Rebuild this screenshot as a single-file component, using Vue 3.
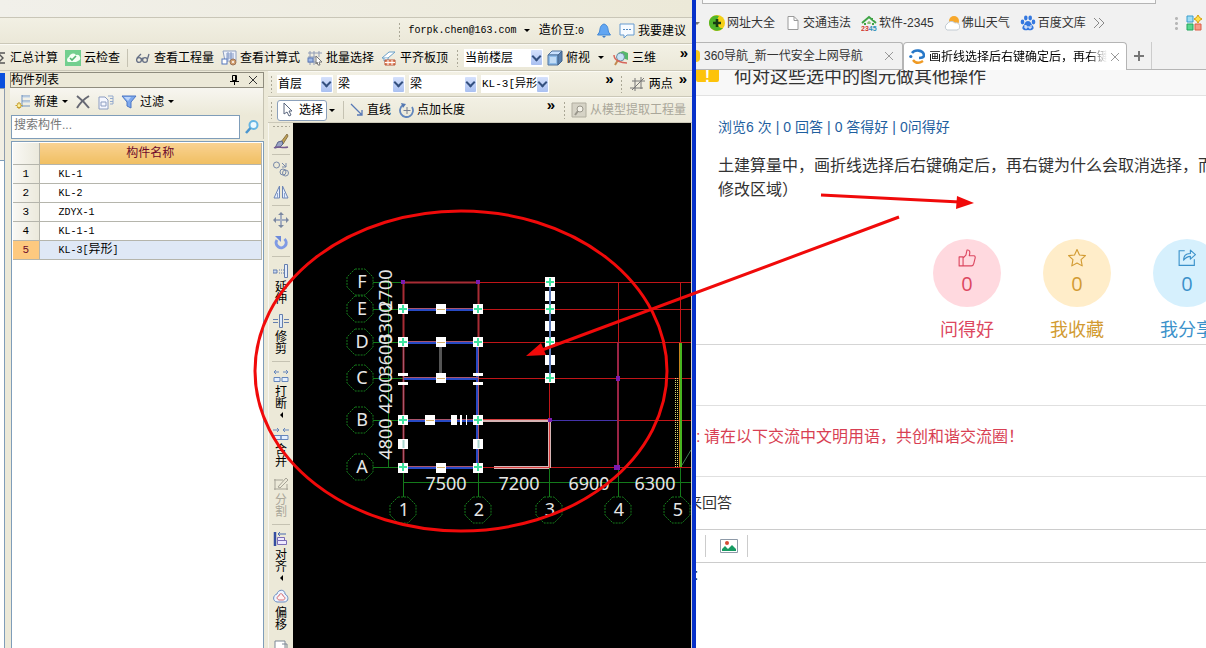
<script setup>
import { ref } from 'vue'

const icons = {
  sigma: '<path d="M14 3H7l5 5-5 5h7" fill="none" stroke="#555" stroke-width="1.4"/>',
  cloud: '<rect width="16" height="16" fill="#72cf8f"/><path d="M3 12a3 3 0 0 1 1-5 4 4 0 0 1 7-2 3 3 0 0 1 2 6l-2 1z" fill="#f5fff6"/><path d="M5 8l2 2 4-4" fill="none" stroke="#52b573" stroke-width="1.6"/>',
  glasses: '<g fill="none" stroke="#667085" stroke-width="1.3"><circle cx="4" cy="10" r="2.4"/><circle cx="10" cy="10" r="2.4"/><path d="M6 9l2-1M2 8l4-4M12.500 9l1.500-5"/></g>',
  formula: '<path d="M2 1h13v10H4z" fill="#eef2fb" stroke="#8fa0c0"/><path d="M5 4h8M5 6h8M5 8h8M7 2v8M10 2v8" stroke="#8298c5" fill="none"/><rect x="1" y="9" width="5" height="5" fill="#fff" stroke="#5577bb"/><circle cx="12" cy="12" r="3" fill="#d2a070" stroke="#9c7458"/><circle cx="12" cy="12" r="1" fill="#fff"/>',
  batch: '<path d="M1 3h14M1 7h9M1 12h8M3 1v14M7 1v14M12 1v6" stroke="#8f9bb5" fill="none"/><rect x="1" y="8" width="5" height="4" fill="#9eb8e6" stroke="#5b79b5"/><path d="M9 6l6 6-3 0 1 3-2 0-1-3-1 2z" fill="#fff" stroke="#777"/>',
  slab: '<path d="M1 8L8 2h6L7 8z" fill="#fff" stroke="#6aa0c8"/><path d="M3 8v3h4V8" fill="#d9ecf7" stroke="#6aa0c8"/><path d="M4 10h10v5H4z" fill="#e88b68" stroke="#b8583a"/><path d="M4 12.500h10M7 10v5M11 10v5" stroke="#fff"/>',
  cube: '<path d="M1 5l4-4h10l-4 4z" fill="#c9e1ff" stroke="#51749e"/><path d="M1 5h10v10H1z" fill="#8fbce9" stroke="#51749e"/><path d="M11 5l4-4v10l-4 4z" fill="#577fae" stroke="#44658c"/><path d="M3 7h6v6H3z" fill="#c2dcf6"/>',
  orbit: '<path d="M5 3l5-2 5 2v7l-6-2z" fill="#54b86a"/><circle cx="7.500" cy="7" r="4" fill="#c6e2f6" stroke="#6c8ba0"/><path d="M5 10l-3 5" stroke="#c18b50" stroke-width="2"/><path d="M1 5c0 6 8 8 13 8" fill="none" stroke="#d6655b" stroke-width="1.500"/>',
  bell: '<path d="M8 1c4 1 4 5 4.500 8l2 3h-13l2-3C4 6 4 2 8 1z" fill="#62a6f2" stroke="#4388d4"/><path d="M6 13h4l-2 2z" fill="#3f7cc5"/>',
  bubble: '<path d="M1 1h14v11H8l-3 3v-3H1z" fill="#f7fbff" stroke="#669bd0"/><path d="M4 6.500h2M7 6.500h2M10 6.500h2" stroke="#5188bf"/>',
  add: '<path d="M7 1v12M7 2h8M7 7h8M7 12h8" stroke="#6e93c2" fill="none"/><path d="M8 3h7M8 8h7" stroke="#b9cfe8"/><path d="M4 8v7M.5 11.500h7M2 9.500l4 4M6 9.500l-4 4" stroke="#c8a02d" stroke-width="1.200"/><circle cx="4" cy="11.500" r="1.500" fill="#fff5a4"/>',
  cross: '<path d="M2 2c4 3 8 7 12 12M14 2C9 5 5 9 2 14" stroke="#666873" stroke-width="2" fill="none"/>',
  copyTo: '<path d="M1 3h6l3 3v9H1z" fill="#f5f7ff" stroke="#8b9cc0"/><path d="M3 8h5v4H3z" fill="none" stroke="#8b9cc0"/><path d="M10 2h5v8h-3M12 4.500h3M12 7.500h3" fill="none" stroke="#93a9cd"/>',
  funnel: '<path d="M1 2h14L10 8v6l-4-2V8z" fill="#7da8ed" stroke="#4d76c4"/><path d="M3 3h7L7 7z" fill="#bcd5fb"/>',
  search: '<circle cx="9.500" cy="6" r="4" fill="#ecf9ff" stroke="#65b5e3" stroke-width="2"/><path d="M6.500 9L2 14" stroke="#4b96cf" stroke-width="2.600"/>',
  twoPoint: '<path d="M2 5h13M0 12h13M5 2v13M11 1v12M2 14L14 2" stroke="#777" fill="none"/>',
  pointer: '<path d="M4 1v11l3-2 2 4 2-1-2-4h3z" fill="#fff" stroke="#59657d"/>',
  line: '<path d="M2 2l11 11M13 8v5H8" fill="none" stroke="#5778b6" stroke-width="1.300"/>',
  pointLen: '<path d="M4 3a6.500 6.500 0 1 0 9 2" fill="none" stroke="#6186bd" stroke-width="1.800"/><path d="M2 1l5 1-3 4z" fill="#5478b1"/><path d="M8 5v7M4.500 8.500h7" stroke="#777f90"/>',
  model: '<path d="M1 1h14v14H1z" fill="#d6d3c6" stroke="#b1aea0"/><circle cx="9" cy="7" r="3" fill="#f4f2e9" stroke="#99968b"/><path d="M7 9l-3 4" stroke="#99968b" stroke-width="2"/>',
  brush: '<path d="M8 9l6-8 1 2-5 8z" fill="#bfa254" stroke="#8a7348"/><path d="M5 9l4-1 1 3-3 3-5 1z" fill="#9ba5c5" stroke="#59648b"/><path d="M1 15c4-3 8 1 14-1" stroke="#755a90" stroke-width="1.500" fill="none"/>',
  clone: '<circle cx="3.500" cy="4" r="3" fill="none" stroke="#7889a8"/><path d="M9 2l4 4M13 2v4H9" stroke="#7889a8" fill="none"/><circle cx="10" cy="11" r="3" fill="none" stroke="#7889a8"/><circle cx="12.500" cy="12" r="3" fill="none" stroke="#7889a8"/>',
  mirror: '<path d="M6.500 2v12H1zM9.500 2v12H15z" fill="#e6efff" stroke="#6e86b5"/><path d="M4.500 9v5M11.500 9v5" stroke="#8da4ce"/>',
  move: '<path d="M7.500 2v12M8.500 2v12M2 7.500h12M2 8.500h12" stroke="#a3adc0"/><path d="M5 3l3-3 3 3zM5 13l3 3 3-3zM3 5L0 8l3 3zM13 5l3 3-3 3z" fill="#7b88a0"/>',
  rotate: '<path d="M11.500 4A5 5 0 1 1 4 5" fill="none" stroke="#7f9ae4" stroke-width="3"/><path d="M2 1h6v6z" fill="#6d8adb"/>',
  extend: '<path d="M0 7h4v3H0z" fill="#c8d8f1" stroke="#657fae"/><path d="M6 7h5M6 10h5" stroke="#657fae" stroke-dasharray="1 1"/><path d="M11.500 1.500h3v13h-3z" fill="#e5edfa" stroke="#657fae"/>',
  trim: '<path d="M0 6.500h5M0 9.500h5M11 6.500h5M11 9.500h5" stroke="#657fae"/><path d="M6.500 1.500h3v13h-3z" fill="#dce9fa" stroke="#657fae"/>',
  split: '<path d="M1 4h5M10 4h5M3 2L1 4l2 2M13 2l2 2-2 2" fill="none" stroke="#6687bc"/><path d="M1 9.500h6v4H1zM9 9.500h6v4H9z" fill="#e4effe" stroke="#6687bc"/>',
  merge: '<path d="M0 4h6M10 4h6M4 2l2 2-2 2M12 2l-2 2 2 2" fill="none" stroke="#6687bc"/><path d="M1 9.500h7v4H1zM8 9.500h7v4H8z" fill="#e4effe" stroke="#6687bc"/>',
  divide: '<path d="M1 4h9M1 13h14M2 3v11M14 8v6M5 11l8-9 2 2-8 8z" fill="none" stroke="#a6a396"/>',
  align: '<path d="M2 1v14" stroke="#344da0" stroke-width="2.500"/><path d="M4.500 6.500h7v3h-7zM4.500 9.500h9v4h-9z" fill="#eee8ff" stroke="#7b6db5"/><path d="M5 3h8M7 1L5 3l2 2" fill="none" stroke="#4868ae"/>',
  offset: '<path d="M4 5c1-5 8-5 8 0 4 2 4 8-1 8H4C-1 12 0 6 4 5z" fill="#edf4ff" stroke="#6b8cc2"/><path d="M6 7c0-3 4-3 4 0 3 1 2 4 0 4H6C3 10 4 7 6 7z" fill="#fff3f3" stroke="#d76c72"/>',
  sheet: '<path d="M2 2h10v12H2z" fill="#fff" stroke="#7d8796"/><path d="M9 5h5v5" fill="none" stroke="#7d8796"/>',
  plusBall: '<circle cx="8" cy="8" r="8" fill="#f3cf16"/><path d="M0 8a8 8 0 0 0 14 5C9 14 6 6 10 1 5-1 0 3 0 8z" fill="#4fb52a"/><path d="M8 4v8M4 8h8" stroke="#173c12" stroke-width="2.600"/>',
  page: '<path d="M3 1.500h6l4 4v9H3z" fill="#fff" stroke="#9a9a9a"/><path d="M9 1.500v4h4" fill="none" stroke="#9a9a9a"/>',
  house: '<path d="M1 8l7-6 7 6M11 3v2M4 8v2M12 8v2" fill="none" stroke="#3fa446" stroke-width="2"/><path d="M8 6v3M6 8h4" stroke="#66b24d"/>',
  weather: '<circle cx="10" cy="6" r="5" fill="#f7a82c"/><path d="M3 15a3.500 3.500 0 0 1 0-6 5 5 0 0 1 8-1 3.600 3.600 0 0 1 2 7z" fill="#fff" stroke="#c3ccd3"/>',
  paw: '<g fill="#3478df"><ellipse cx="2.500" cy="7" rx="1.800" ry="2.400"/><ellipse cx="5.800" cy="3" rx="1.800" ry="2.400"/><ellipse cx="10.200" cy="3" rx="1.800" ry="2.400"/><ellipse cx="13.500" cy="7" rx="1.800" ry="2.400"/><path d="M8 6c3 0 3 3 5 5 2 3-1 5-5 4-4 1-7-1-5-4 2-2 2-5 5-5z"/></g><path d="M5 10v3h2v-2H5M9 11v2h2v-3" fill="none" stroke="#fff"/>',
  apps: '<path d="M1 1h6v6H1z" fill="#9fdcf4" stroke="#389dcc"/><path d="M1 9h6v6H1z" fill="#58d78d" stroke="#22a65d"/><path d="M9 9h6v6H9z" fill="#f79b86" stroke="#db5f46"/><path d="M12 0l1.500 2.500L16 4l-2.500 1.500L12 8l-1.500-2.500L8 4l2.500-1.500z" fill="#ffe14b" stroke="#d59b0b"/>',
  swirl: '<path d="M3 4C6 0 14 1 15 6c0 3-3 3-5 3" fill="none" stroke="#2878c8" stroke-width="2.600"/><path d="M4 11c3 4 7 3 10 1" fill="none" stroke="#ef9a24" stroke-width="2.400"/><circle cx="1.800" cy="7.500" r="1.600" fill="#2878c8"/>',
  thumb: '<path d="M1 7h3.500v8H1zM4.500 8L7 5.500 8 1c2.500-.5 3 1.500 2 5h4c1.500 0 1.500 1.500 1 3l-1 4c-.3 1.500-1 2-2 2H4.500" fill="none" stroke="currentColor" stroke-linejoin="round"/>',
  star: '<path d="M8 .5l2.200 4.800 5.300.6-3.900 3.600 1 5.500L8 12.500 3.400 15l1-5.500L.5 5.900l5.300-.6z" fill="none" stroke="currentColor" stroke-linejoin="round"/>',
  share: '<path d="M6 1.500H1v13h13.500V9" fill="none" stroke="currentColor"/><path d="M5 10c0-4 2-6 6-6V1l4.500 4L11 9V6.500C8 6.500 6.500 8 5 10z" fill="none" stroke="currentColor" stroke-linejoin="round"/>',
  picture: '<path d="M.5 2.500h17v13H.5z" fill="#fff" stroke="#8e9aa8"/><circle cx="7" cy="6" r="2" fill="#d44b35"/><path d="M2 14v-2l3-3 3 3 4-4 4 4v2z" fill="#169b62"/>',
}

const mainTools = [
  { icon: 'glasses', label: '查看工程量' },
  { icon: 'formula', label: '查看计算式' },
  { icon: 'batch', label: '批量选择' },
  { icon: 'slab', label: '平齐板顶' },
]
const combos = ['首层', '梁', '梁', 'KL-3[异形]']
const rows = ref([
  ['KL-1', ''], ['KL-2', ''], ['ZDYX-1', ''], ['KL-1-1', ''], ['KL-3[', '异形'],
])
const sideTools = [
  { icon: 'brush', name: '格式刷' }, { sep: true },
  { icon: 'clone', name: '复制' }, { icon: 'mirror', name: '镜像' }, { sep: true },
  { icon: 'move', name: '移动' }, { icon: 'rotate', name: '旋转' }, { sep: true },
  { icon: 'extend', label: '延伸' }, { icon: 'trim', label: '修剪' }, { sep: true },
  { icon: 'split', label: '打断', menu: true }, { icon: 'merge', label: '合并' },
  { icon: 'divide', label: '分割', disabled: true }, { sep: true },
  { icon: 'align', label: '对齐', menu: true }, { icon: 'offset', label: '偏移' },
  { icon: 'sheet', name: '更多' },
]
const bookmarks = [
  { icon: 'plusBall', label: '网址大全' }, { icon: 'page', label: '交通违法' },
  { icon: 'house', label: '软件-2345' }, { icon: 'weather', label: '佛山天气' },
  { icon: 'paw', label: '百度文库' },
]
const votes = [
  { icon: 'thumb', label: '问得好', tone: 'pink' },
  { icon: 'star', label: '我收藏', tone: 'gold' },
  { icon: 'share', label: '我分享', tone: 'blue' },
]
const axisY = [['F', 282], ['E', 309], ['D', 342], ['C', 378], ['B', 420], ['A', 467]]
const axisX = [['1', 404], ['2', 479], ['3', 550], ['4', 619], ['5', 678]]
const spansX = [['7500', 447], ['7200', 520], ['6900', 590], ['6300', 656]]
const spansY = [['2700', 290], ['3300', 323], ['3600', 355], ['4200', 393], ['4800', 439]]
const grips = [
  [404, 309], [442, 309], [479, 309], [404, 342], [442, 342], [479, 342], [442, 378],
  [404, 420], [431, 420], [479, 420], [404, 444], [479, 444], [404, 468], [442, 468], [479, 468],
  [551, 282], [551, 296], [551, 309], [551, 326], [551, 342], [551, 360], [551, 378],
]
const nodes = [
  [404, 309], [479, 309], [404, 342], [479, 342], [404, 420], [479, 420], [404, 467], [479, 467],
  [551, 282], [551, 309], [551, 342], [551, 378],
]
const octagon = (x, y) => [[-5, -13], [5, -13], [13, -5], [13, 5], [5, 13], [-5, 13], [-13, 5], [-13, -5]]
  .map(([a, b]) => `${x + a},${y + b}`).join(' ')
const keyword = ref('')
</script>

<template>
  <div class="screen">
    <section class="cad">
      <header class="caption"></header>
      <div class="bar account">
        <i class="grip"></i>
        <button class="mono email">forpk.chen@163.com<i class="caret"></i></button>
        <span class="beans">造价豆:<span class="mono">0</span></span>
        <button aria-label="通知"><svg viewBox="0 0 16 16" v-html="icons.bell"></svg></button>
        <button><svg viewBox="0 0 16 16" v-html="icons.bubble"></svg>我要建议</button>
      </div>
      <div class="bar main">
        <button class="sum"><svg viewBox="0 0 16 16" v-html="icons.sigma"></svg>汇总计算</button>
        <button><svg viewBox="0 0 16 16" v-html="icons.cloud"></svg>云检查</button>
        <i class="vline"></i>
        <button v-for="t in mainTools" :key="t.label"><svg viewBox="0 0 16 16" v-html="icons[t.icon]"></svg>{{ t.label }}</button>
        <i class="grip"></i>
        <label class="combo view"><select aria-label="楼层范围"><option>当前楼层</option></select><i class="drop"></i></label>
        <button><svg viewBox="0 0 16 16" v-html="icons.cube"></svg>俯视<i class="caret wide"></i></button>
        <button><svg viewBox="0 0 16 16" v-html="icons.orbit"></svg>三维</button>
        <button class="more" aria-label="更多">»</button>
      </div>

      <div class="body">
        <div class="sliver"><i class="blue-cap"></i><i class="tab"></i><i class="sheet"></i></div>
        <aside class="panel">
          <h2 class="panel-title"><span>构件列表</span>
            <svg viewBox="0 0 30 12"><path d="M2.500 1.500h4v5h-4zM0 7.500h9M4.500 7v4M5.500 1v6" fill="none" stroke="#000" /><path d="M19 2l8 8M27 2l-8 8" stroke="#333" fill="none" /></svg>
          </h2>
          <div class="panel-tools">
            <button><svg viewBox="0 0 16 16" v-html="icons.add"></svg>新建<i class="caret"></i></button>
            <button aria-label="删除"><svg viewBox="0 0 16 16" v-html="icons.cross"></svg></button>
            <button aria-label="复制到"><svg viewBox="0 0 16 16" v-html="icons.copyTo"></svg></button>
            <button><svg viewBox="0 0 16 16" v-html="icons.funnel"></svg>过滤<i class="caret"></i></button>
          </div>
          <div class="search">
            <input v-model="keyword" type="text" aria-label="搜索构件" placeholder="搜索构件...">
            <button aria-label="搜索"><svg viewBox="0 0 16 16" v-html="icons.search"></svg></button>
          </div>
          <div class="list">
            <table>
              <thead><tr><th class="no"></th><th class="name">构件名称</th></tr></thead>
              <tbody>
                <tr v-for="(r, i) in rows" :key="i" :class="{ active: i === 4 }">
                  <td class="no">{{ i + 1 }}</td>
                  <td class="name"><span class="mono">{{ r[0] }}</span>{{ r[1] }}<span v-if="r[1]" class="mono">]</span></td>
                </tr>
              </tbody>
            </table>
          </div>
        </aside>

        <div class="work">
          <div class="bar selectors">
            <i class="grip"></i>
            <label v-for="(c, i) in combos" :key="i" class="combo" :class="{ short: i === 0, code: i === 3 }"><select :aria-label="'构件选择' + (i + 1)"><option>{{ c }}</option></select><i class="drop"></i></label>
            <button class="more" aria-label="更多">»</button>
            <i class="grip"></i>
            <button><svg viewBox="0 0 16 16" v-html="icons.twoPoint"></svg>两点</button>
            <button class="more end" aria-label="更多">»</button>
          </div>
          <div class="bar draw">
            <i class="grip"></i>
            <button class="picked"><svg viewBox="0 0 16 16" v-html="icons.pointer"></svg>选择</button>
            <button class="tiny" aria-label="选择方式"><i class="caret"></i></button>
            <i class="vline"></i>
            <button><svg viewBox="0 0 16 16" v-html="icons.line"></svg>直线</button>
            <button><svg viewBox="0 0 16 16" v-html="icons.pointLen"></svg>点加长度</button>
            <button class="more" aria-label="更多">»</button>
            <i class="grip"></i>
            <button disabled><svg viewBox="0 0 16 16" v-html="icons.model"></svg>从模型提取工程量</button>
          </div>
          <div class="stage">
            <nav class="side">
              <i class="hgrip"></i>
              <template v-for="(t, i) in sideTools" :key="i">
                <i v-if="t.sep" class="hline"></i>
                <button v-else :class="{ labelled: t.label, menu: t.menu }" :disabled="t.disabled" :aria-label="t.label || t.name">
                  <svg viewBox="0 0 16 16" v-html="icons[t.icon]"></svg>
                  <span v-if="t.label">{{ t.label }}</span>
                  <i v-if="t.menu" class="left-caret"></i>
                </button>
              </template>
            </nav>
            <svg class="canvas" viewBox="294 123 398 525" preserveAspectRatio="xMinYMin slice">
              <g stroke="#147a1b" fill="none">
                <path v-for="a in axisY" :key="a[0]" :d="`M374 ${a[1]}.5H404`" />
                <path d="M389.500 278V467M404.500 468V497M479.500 468V497M550.500 468V497M619.500 468V497M681.500 468V497M404 482.500H692" />
                <polygon v-for="a in axisY" :key="'l' + a[0]" :points="octagon(361, a[1])" stroke-dasharray="2 1" />
                <polygon v-for="a in axisX" :key="'b' + a[0]" :points="octagon(a[1], 510)" stroke-dasharray="2 1" />
              </g>
              <g stroke="#c01518" fill="none">
                <path d="M404 282.500H692M404 309.500H692M404 342.500H692M404 378.500H692M479 420.500H692M404 467.500H692M550.500 282V467M619.500 282V467M681.500 282V467" />
              </g>
              <path d="M404 282.500H479M404.500 282V467M479.500 282V342" stroke="#a82c35" stroke-width="2" fill="none" />
              <path d="M404 309.500H479M404 342.500H479M404 378.500H479M404 420.500H479M404 467.500H479M478.500 342V467" stroke="#2749c4" stroke-width="3" fill="none" />
              <path d="M404 308.500H479M404 341.500H479M404 377.500H479M404 419.500H479M404 466.500H479M479.500 342V467M404.500 342V467" stroke="#aa556d" fill="none" />
              <path d="M441.500 346V374" stroke="#555" stroke-width="3" />
              <path d="M483 420.500H550M495 467.500H550M550.500 420V468" stroke="#d6b4b4" stroke-width="3" fill="none" />
              <path d="M484 419.500H550M495 467.500H550M550.500 420V468" stroke="#d83f3f" fill="none" />
              <path d="M551 420.500H619" stroke="#4433aa" />
              <path d="M619 342V467" stroke="#9b2445" stroke-width="2" />
              <path d="M681.500 343V467" stroke="#48b420" stroke-width="3" />
              <path d="M680.500 343V467" stroke="#c6861d" />
              <path d="M676.500 378V467M678.500 378V467" stroke="#e0d870" stroke-dasharray="1 1" />
              <path d="M683 465L692 450" stroke="#427b55" />
              <g fill="#7a1bb0">
                <rect x="402" y="280" width="4" height="4" /><rect x="477" y="280" width="4" height="4" />
                <rect x="617" y="376" width="4" height="5" /><rect x="549" y="418" width="4" height="4" /><rect x="615" y="465" width="6" height="5" />
              </g>
              <g fill="#fff">
                <rect v-for="(g, i) in grips" :key="i" :x="g[0] - 5" :y="g[1] - 5" width="10" height="10" />
                <path d="M399 373h10v3h-10zM399 382h10v3h-10zM474 373h10v3h-10zM474 382h10v3h-10zM452 415h6v10h-6zM461 415h2v10h-2zM467 415h1v10h-1z" />
              </g>
              <path d="M551 287V374" stroke="#5f7cba" stroke-width="2" />
              <path d="M438 309.500h8M438 342.500h8M438 378.500h8M427 420.500h8M438 467.500h8" stroke="#d7b06a" />
              <path d="M404.500 440V448M479.500 440V448" stroke="#a9d5cd" stroke-width="2" />
              <path v-for="(n, i) in nodes" :key="'n' + i" :d="`M${n[0] - 4} ${n[1]}h8M${n[0]} ${n[1] - 4}v8`" stroke="#3fe3a0" stroke-width="2" />
              <g class="dims">
                <text v-for="a in axisY" :key="a[0]" :x="363" :y="a[1] + 6">{{ a[0] }}</text>
                <text v-for="a in axisX" :key="a[0]" :x="a[1] + 1" y="516">{{ a[0] }}</text>
                <text v-for="s in spansX" :key="s[0]" :x="s[1]" y="490">{{ s[0] }}</text>
                <text v-for="s in spansY" :key="s[0]" :transform="`translate(393 ${s[1]}) rotate(-90)`">{{ s[0] }}</text>
              </g>
            </svg>
          </div>
        </div>
      </div>
    </section>

    <section class="browser">
      <div class="address"><i class="field"></i><i class="cell"></i></div>
      <nav class="bookmarks">
        <i class="caret first"></i>
        <a v-for="b in bookmarks" :key="b.label" href="#">
          <svg viewBox="0 0 16 16"><g v-html="icons[b.icon]"></g><text v-if="b.icon === 'house'" class="tag" x="0" y="16"><tspan fill="#d23a2e">23</tspan><tspan fill="#2c8fb8">45</tspan></text></svg>{{ b.label }}
        </a>
        <button class="chev" aria-label="更多书签"><svg viewBox="0 0 12 12"><path d="M1 1l5 5-5 5M6 1l5 5-5 5" fill="none" stroke="#888" /></svg></button>
        <i class="dots"></i>
        <button aria-label="应用"><svg viewBox="0 0 16 16" v-html="icons.apps"></svg></button>
      </nav>
      <div class="tabs">
        <div class="tab-item old"><i class="fav"></i><span>360导航_新一代安全上网导航</span>
          <button aria-label="关闭"><svg viewBox="0 0 8 8"><path d="M0 0l8 8M8 0L0 8" stroke="#999" fill="none" /></svg></button></div>
        <div class="tab-item current"><svg class="fav-icon" viewBox="0 0 16 16" v-html="icons.swirl"></svg><span>画折线选择后右键确定后，再右键</span>
          <button aria-label="关闭"><svg viewBox="0 0 8 8"><path d="M0 0l8 8M8 0L0 8" stroke="#999" fill="none" /></svg></button></div>
        <button class="plus" aria-label="新标签页"><svg viewBox="0 0 10 10"><path d="M5 0v10M0 5h10" stroke="#777" stroke-width="2" /></svg></button>
      </div>
      <main class="page">
        <header class="question"><i class="badge">!</i><h1>何对这些选中的图元做其他操作</h1></header>
        <div class="stats">
          <a href="#">浏览6 次</a><i>|</i><a href="#">0 回答</a><i>|</i><a href="#">0 答得好</a><i>|</i><a href="#">0问得好</a>
        </div>
        <p class="desc"><span>土建算量中，画折线选择后右键确定后，再右键为什么会取消选择，而</span><span>修改区域）</span></p>
        <div class="votes">
          <button v-for="v in votes" :key="v.label" :class="v.tone">
            <span class="disc"><svg viewBox="0 0 16 16" v-html="icons[v.icon]"></svg><b>0</b></span>{{ v.label }}
          </button>
        </div>
        <div class="blank"></div>
        <p class="notice"><i>:</i>请在以下交流中文明用语，共创和谐交流圈！</p>
        <h3 class="reply"><span>来回答</span></h3>
        <div class="editor-tools"><button aria-label="插入图片"><svg viewBox="0 0 18 18" v-html="icons.picture"></svg></button></div>
        <div class="editor">:</div>
      </main>
    </section>

    <svg class="marks" viewBox="0 0 1206 648" preserveAspectRatio="none">
      <g fill="none" stroke="#f00a0a" stroke-width="3">
        <ellipse cx="461" cy="371" rx="206" ry="160" />
        <path d="M821 195L960 202M899 217L542 350" />
      </g>
      <path d="M974 203L956 209L957 196zM526 356L541 343L546 355z" fill="#f00a0a" />
    </svg>
  </div>
</template>

<style>
html, body, #app { height: 100%; }
</style>

<style scoped>
.screen { position: relative; display: flex; height: 100vh; overflow: hidden; background: #fff; color: #000; font: 12px/16px "Liberation Sans", "Noto Sans CJK SC", sans-serif; }
.screen *, .screen { box-sizing: border-box; }
i, b { font-style: normal; font-weight: 400; }
button { display: flex; align-items: center; gap: 3px; flex: none; margin: 0; padding: 0; border: 0; background: none; color: inherit; font: inherit; white-space: nowrap; }
button svg, a svg { flex: none; width: 16px; height: 16px; }
button:disabled { color: #aaa79a; }
.mono { font-family: "Liberation Mono", monospace; font-size: 10px; }
.marks { position: absolute; inset: 0; width: 100%; height: 100%; pointer-events: none; }

.cad { flex: 692 1 0; min-width: 0; display: flex; flex-direction: column; background: #ece9d8; overflow: hidden; }
.caption { flex: none; height: 17px; background: linear-gradient(90deg, #f1f0ea, #ece9d8); }
.bar { display: flex; align-items: center; flex: none; height: 26px; border-top: 1px solid #fbfaf4; border-bottom: 1px solid #cbc8b8; background: linear-gradient(#f2f0e4, #ebe8d8); }
.grip { flex: none; width: 3px; height: 18px; background: radial-gradient(circle, #aaa796 1px, transparent 1px) 0 0 / 3px 4px; }
.vline { flex: none; width: 1px; height: 18px; background: #c5c2b2; }
.caret { width: 0; height: 0; border: 3px solid transparent; border-top-color: #000; border-bottom: 0; margin-left: 1px; }
.caret.wide { margin-left: 5px; }
.account { height: 27px; justify-content: flex-end; padding-right: 6px; border-top-color: #c9c6b7; }
.account .email { margin: 0 9px 0 8px; gap: 6px; }
.beans { margin-right: 12px; white-space: nowrap; }
.account button + button { margin-left: 7px; }
.main { height: 27px; padding-right: 4px; }
.main button { margin: 0 4px 0 3px; }
.main .sum { margin-left: -9px; }
.main .vline { margin: 0 4px 0 3px; }
.main .grip { margin: 0 5px 0 4px; }
.main .caret.wide { margin-right: 2px; }
.bar .more { margin: 0 0 10px auto; font: 700 15px/12px "Liberation Sans", sans-serif; }
.combo { display: flex; flex: none; align-items: center; width: 68px; height: 18px; margin-right: 4px; background: #fff; }
.combo.short { width: 56px; }
.combo.view { width: 79px; margin-right: 1px; }
.combo select { flex: 1; min-width: 0; height: 18px; padding: 0 0 0 1px; border: 0; background: none; appearance: none; color: #000; font: inherit; }
.combo.code select { font: 11px/16px "Liberation Mono", "Noto Sans CJK SC", monospace; }
.drop { flex: none; display: grid; place-items: center; width: 11px; height: 15px; margin-right: 1px; border-radius: 1px; background: linear-gradient(#d5e1fc, #a9c0f1); }
.drop::before { content: ""; width: 5px; height: 5px; margin-top: -3px; border: solid #34507f; border-width: 0 2px 2px 0; transform: rotate(45deg); }

.body { flex: 1; min-height: 0; display: flex; }
.sliver { flex: none; display: flex; flex-direction: column; width: 5px; margin: 2px 5px 0 0; }
.blue-cap { height: 15px; background: #0a50dd; }
.sliver .tab { height: 72px; border: solid #8e9dae; border-width: 1px 1px 0 0; background: #f1efe4; }
.sliver .sheet { flex: 1; border: solid #7f9db9; border-width: 1px 1px 0 0; background: #fff; }
.panel { flex: 254 1 0; min-width: 0; display: flex; flex-direction: column; margin-top: 1px; }
.panel-title { display: flex; justify-content: space-between; align-items: center; height: 16px; margin: 0; padding-right: 3px; border: 1px solid #8f8c7e; font: inherit; line-height: 14px; }
.panel-title svg { width: 30px; height: 12px; }
.panel-tools { display: flex; align-items: center; gap: 7px; height: 27px; padding-left: 5px; background: linear-gradient(#f7f6f0, #ece9d8); border-right: 1px solid #c5c2b2; }
.search { display: flex; height: 24px; margin-left: 1px; }
.search input { flex: 1; min-width: 0; padding: 0 2px 4px; border: 1px solid #7f9db9; background: #fff; font: inherit; }
.search input::placeholder { color: #777; opacity: 1; }
.search button { width: 24px; justify-content: center; border-right: 1px solid #c5c2b2; }
.list { flex: 1; margin: 2px 0 0 1px; padding: 1px; border: 1px solid #7f9db9; border-width: 1px 1px 0; background: #fff; }
table { width: 100%; border-collapse: collapse; table-layout: fixed; }
tr { height: 19px; }
thead tr { height: 21px; }
th, td { padding: 0; border: solid #b5b5ac; border-width: 0 1px 1px 0; line-height: 16px; font-weight: 400; }
.no { width: 26px; text-align: center; font: 11px/16px "Liberation Mono", monospace; background: linear-gradient(90deg, #f9f8f4, #ebe9dc); }
th.name { background: linear-gradient(#f9d292, #f0bf62); color: #6d0b2c; }
td.name { padding-left: 19px; }
.active .name { background: #dfe8f6; }
.active .no { background: #fdc97f; color: #6d0b2c; }

.work { flex: 424 1 0; min-width: 0; display: flex; flex-direction: column; margin-left: 4px; }
.selectors .grip, .draw .grip { margin: 0 4px 0 2px; }
.selectors { padding-right: 5px; }
.selectors .more + .grip { margin: 0 7px 0 6px; }
.selectors .more.end { margin-left: 6px; }
.draw { padding-right: 6px; }
.draw .picked { height: 21px; padding: 0 3px 0 2px; border: 1px solid #8ba0bb; border-radius: 3px; background: #fff; }
.draw .tiny { padding: 0 8px 0 1px; }
.draw .vline + button { margin: 0 8px 0 5px; gap: 2px; }
.draw .vline + button + button { gap: 2px; }
.draw .more + .grip { margin: 0 5px 0 8px; }
.stage { flex: 1; min-height: 0; display: flex; }
.side { flex: none; display: flex; flex-direction: column; width: 25px; overflow: hidden; border-left: 1px solid #f8f7f1; background: #ece9d8; }
.hgrip { flex: none; height: 3px; margin: 2px 3px 1px; background: radial-gradient(circle, #aaa796 1px, transparent 1px) 0 0 / 4px 3px; }
.hline { flex: none; height: 1px; margin: 2px 3px; background: #c5c2b2; }
.side button { height: 23px; justify-content: center; }
.side .labelled { flex-direction: column; justify-content: flex-start; gap: 2px; height: 50px; padding-top: 4px; }
.side .menu { height: 58px; }
.side span { width: 12px; line-height: 12px; white-space: normal; word-break: break-all; }
.left-caret { border: 3px solid transparent; border-right-color: #000; border-left: 0; }
.canvas { flex: 1; min-width: 0; height: 100%; background: #000; border-right: 1px solid #d8d5c8; }
.dims { fill: #e6e6e6; font: 18px "Noto Sans", sans-serif; text-anchor: middle; }

.browser { flex: 510 1 0; min-width: 0; display: flex; flex-direction: column; border-left: 4px solid #0731c9; background: #f1f1f1; overflow: hidden; }
.address { flex: none; display: flex; justify-content: space-between; height: 4px; padding-left: 6px; }
.field { flex: 1; border: solid #b5b5b5; border-width: 0 1px 1px; background: #fafafa; }
.cell { width: 25px; margin-left: 25px; }
.bookmarks { display: flex; align-items: center; flex: none; height: 38px; padding-right: 4px; }
.bookmarks .first { margin: 0 9px 0 -2px; border-top-color: #777; }
.bookmarks a { display: flex; align-items: center; gap: 2px; margin-right: 10px; color: #333; text-decoration: none; white-space: nowrap; }
.tag { font: 700 7px "Liberation Sans", sans-serif; }
.chev svg { width: 12px; height: 12px; }
.chev { margin-left: -3px; }
.dots { width: 3px; height: 15px; margin: 0 8px 0 auto; background: radial-gradient(circle, #b7b7b7 1px, transparent 2px) 0 0 / 3px 5px; }
.tabs { display: flex; align-items: stretch; flex: none; height: 28px; border-bottom: 1px solid #b5b5b5; }
.tab-item { display: flex; align-items: center; gap: 4px; min-width: 0; border: 1px solid #b5b5b5; border-bottom: 0; color: #333; }
.tab-item span { flex: 1; min-width: 0; overflow: hidden; white-space: nowrap; }
.tab-item button svg { width: 8px; height: 8px; }
.old { flex: 0 1 207px; padding-right: 9px; border-left: 0; border-radius: 0 3px 0 0; }
.fav { width: 4px; height: 12px; border-radius: 0 6px 6px 0; background: #f5c71b; }
.current { flex: 0 1 224px; margin-bottom: -1px; padding: 0 7px 0 5px; border-radius: 4px 4px 0 0; background: #fff; color: #000; }
.current span { mask-image: linear-gradient(90deg, #000 90%, transparent); }
.fav-icon { flex: none; width: 16px; height: 16px; }
.plus { width: 25px; justify-content: center; border-right: 1px solid #ccc; }
.plus svg { width: 10px; height: 10px; }
.page { flex: 1; min-height: 0; background: #fff; color: #333; font-size: 16px; line-height: 24px; overflow: hidden; }
.question { display: flex; align-items: flex-end; gap: 15px; height: 26px; overflow: hidden; border-bottom: 1px solid #e2e2e2; background: #f8f8f8; }
.question h1 { margin: 0 0 6px; font-size: 18px; line-height: 24px; font-weight: 400; white-space: nowrap; }
.badge { width: 23px; height: 24px; margin-bottom: 13px; border-radius: 2px; background: #fdc30b; color: #fff; font-weight: 700; line-height: 38px; text-align: center; }
.stats { display: flex; gap: 4px; margin: 19px 0 0 22px; font-size: 14px; color: #1f5f9f; white-space: nowrap; }
.stats a { color: inherit; text-decoration: none; }
.desc { margin: 15px 0 0 22px; }
.desc span { display: block; white-space: nowrap; }
.votes { display: flex; justify-content: flex-end; gap: 42px; height: 143px; margin-right: -15px; padding-top: 37px; border-bottom: 1px solid #d5d5d5; }
.votes button { flex-direction: column; gap: 10px; justify-content: flex-start; width: 68px; font-size: 18px; line-height: 26px; }
.disc { display: flex; flex-direction: column; align-items: center; width: 68px; height: 68px; padding-top: 10px; border-radius: 50%; }
.disc svg { width: 18px; height: 18px; }
.disc b { font: 20px/34px "Open Sans", sans-serif; }
.pink { color: #dc4760; }
.pink .disc { background: #ffd9df; }
.gold { color: #d29b32; }
.gold .disc { background: #ffedc9; }
.blue { color: #3b91ca; }
.blue .disc { background: #d6f0fd; }
.blank { height: 61px; border-bottom: 1px solid #e0e0e0; }
.notice { display: flex; height: 71px; margin: 0; padding-top: 19px; border-bottom: 1px solid #e0e0e0; color: #d83f53; white-space: nowrap; }
.notice i { width: 8px; }
.reply { display: flex; height: 53px; margin: 0; padding-top: 14px; border-bottom: 1px solid #ccc; font-size: 15px; font-weight: 400; }
.reply span { margin-left: -9px; }
.editor-tools { display: flex; align-items: center; height: 33px; padding-left: 9px; border-bottom: 1px solid #ccc; }
.editor-tools button { width: 43px; height: 22px; justify-content: center; border: solid #ccc; border-width: 0 1px; padding-left: 4px; }
.editor-tools svg { width: 18px; height: 18px; }
.editor { margin-left: -2px; }
</style>
